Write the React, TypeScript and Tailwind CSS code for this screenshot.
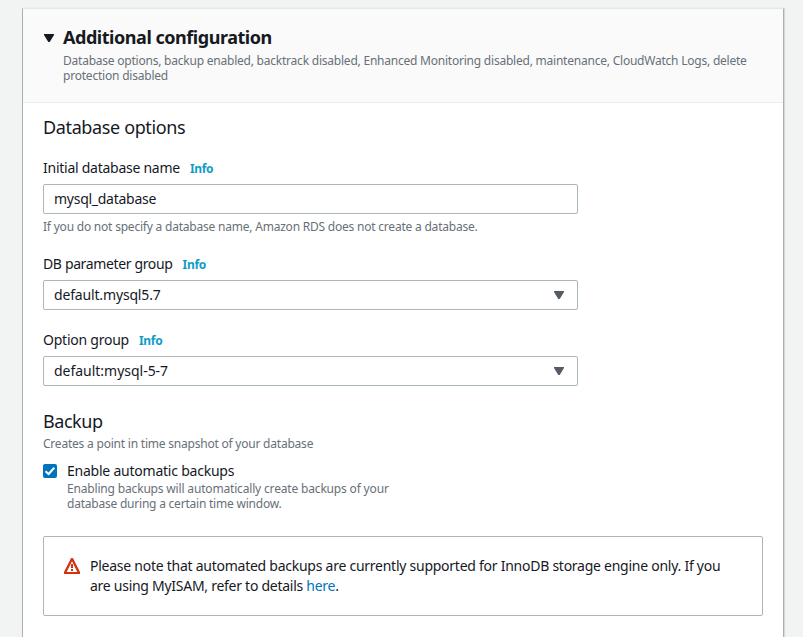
import React from "react";

function Caret({ className }: { className: string }) {
  return (
    <svg width="10" height="8" viewBox="0 0 10 8" className={className} fill="currentColor">
      <path d="M0 0h10v1L5.7 8H4.3L0 1z" />
    </svg>
  );
}

function FieldLabel({ text, className }: { text: string; className: string }) {
  return (
    <div className="flex h-5 items-center text-sm leading-5">
      <span className={className}>{text}</span>
      <a className="mt-0.5 ml-2.5 text-xs leading-5 font-bold tracking-[-0.3px] text-[#0f9bc7]">Info</a>
    </div>
  );
}

function SelectBox({ value, className }: { value: string; className: string }) {
  return (
    <div className="mt-1.5 flex h-[30px] w-[535px] items-center justify-between rounded-[2px] border border-[#aab7b8] bg-white pr-[13px] pl-2.5 text-sm leading-5">
      <span className={className}>{value}</span>
      <Caret className="text-[#545b64]" />
    </div>
  );
}

export default function App() {
  return (
    <div className="h-[637px] w-[803px] overflow-hidden bg-[#f2f3f3] pt-2 pl-[22px] font-['Noto_Sans','Open_Sans',sans-serif] text-[#16191f]">
      <main className="h-[629px] w-[762px] border-x border-t border-x-[#aab1b6] border-t-[#e4e7e7] bg-white shadow-[1px_0_1px_#d5dbdb]">
        <header className="flex h-[94px] border-b border-[#eaeded] bg-[#fafafa] pt-[17px] pl-[21px]">
          <Caret className="mt-2 shrink-0" />
          <div className="ml-[9px] whitespace-nowrap">
            <h1 className="text-lg leading-[22px] font-bold tracking-[-0.46px]">Additional configuration</h1>
            <p className="mt-[5px] text-xs leading-[15px] text-[#687078]">
              <span className="block tracking-[-0.223px]">Database options, backup enabled, backtrack disabled, Enhanced Monitoring disabled, maintenance, CloudWatch Logs, delete</span>
              <span className="block tracking-[-0.21px]">protection disabled</span>
            </p>
          </div>
        </header>

        <div className="px-5 whitespace-nowrap">
          <h2 className="mt-[13px] h-[22px] text-lg leading-[22px] tracking-[-0.37px]">Database options</h2>
          <div className="mt-5">
            <FieldLabel text="Initial database name" className="tracking-[-0.26px]" />
            <input
              className="mt-1.5 block h-[30px] w-[535px] rounded-[2px] border border-[#aab7b8] bg-white px-2.5 pb-0.5 text-sm leading-5 tracking-[-0.27px] outline-none"
              defaultValue="mysql_database"
            />
            <p className="mt-[5px] h-4 text-xs leading-4 tracking-[-0.213px] text-[#687078]">
              If you do not specify a database name, Amazon RDS does not create a database.
            </p>
          </div>
          <div className="mt-[19px]">
            <FieldLabel text="DB parameter group" className="tracking-[-0.36px]" />
            <SelectBox value="default.mysql5.7" className="tracking-[-0.16px]" />
          </div>
          <div className="mt-5">
            <FieldLabel text="Option group" className="tracking-[-0.24px]" />
            <SelectBox value="default:mysql-5-7" className="tracking-[-0.02px]" />
          </div>

          <h2 className="mt-6 h-[22px] text-lg leading-[22px] tracking-[-0.45px]">Backup</h2>
          <p className="mt-1 h-4 text-xs leading-4 tracking-[-0.215px] text-[#687078]">
            Creates a point in time snapshot of your database
          </p>
          <div className="mt-[9px] flex">
            <span className="mt-[3px] flex size-3.5 items-center justify-center rounded-[2px] bg-[#0073bb]">
              <svg width="14" height="14" viewBox="0 0 14 14" fill="none" stroke="white" strokeWidth="2">
                <path d="M2.5 7.3 5.6 10 11.3 3.8" />
              </svg>
            </span>
            <div className="ml-2.5">
              <div className="h-5 text-sm leading-5 tracking-[-0.23px]">Enable automatic backups</div>
              <p className="text-xs leading-[15px] text-[#687078]">
                <span className="block tracking-[-0.17px]">Enabling backups will automatically create backups of your</span>
                <span className="block tracking-[-0.22px]">database during a certain time window.</span>
              </p>
            </div>
          </div>

          <div className="mt-[25px] flex h-20 w-[720px] rounded-[2px] border border-[#aab7b8] pt-[19px] pl-5">
            <svg width="16" height="16" viewBox="0 0 16 16" className="mt-[2px] shrink-0" fill="#d13212">
              <path fillRule="evenodd" d="M7.1 0h1.8L16 14v2H0v-2zM8 3.2 2.7 14h10.6z" />
              <path d="M7 6h2v4H7zM7 11h2v2H7z" />
            </svg>
            <p className="ml-2.5 text-sm leading-5">
              <span className="block tracking-[-0.255px]">Please note that automated backups are currently supported for InnoDB storage engine only. If you</span>
              <span className="block tracking-[-0.27px]">
                are using MyISAM, refer to details <a className="text-[#0073bb]">here</a>.
              </span>
            </p>
          </div>
        </div>
      </main>
    </div>
  );
}
